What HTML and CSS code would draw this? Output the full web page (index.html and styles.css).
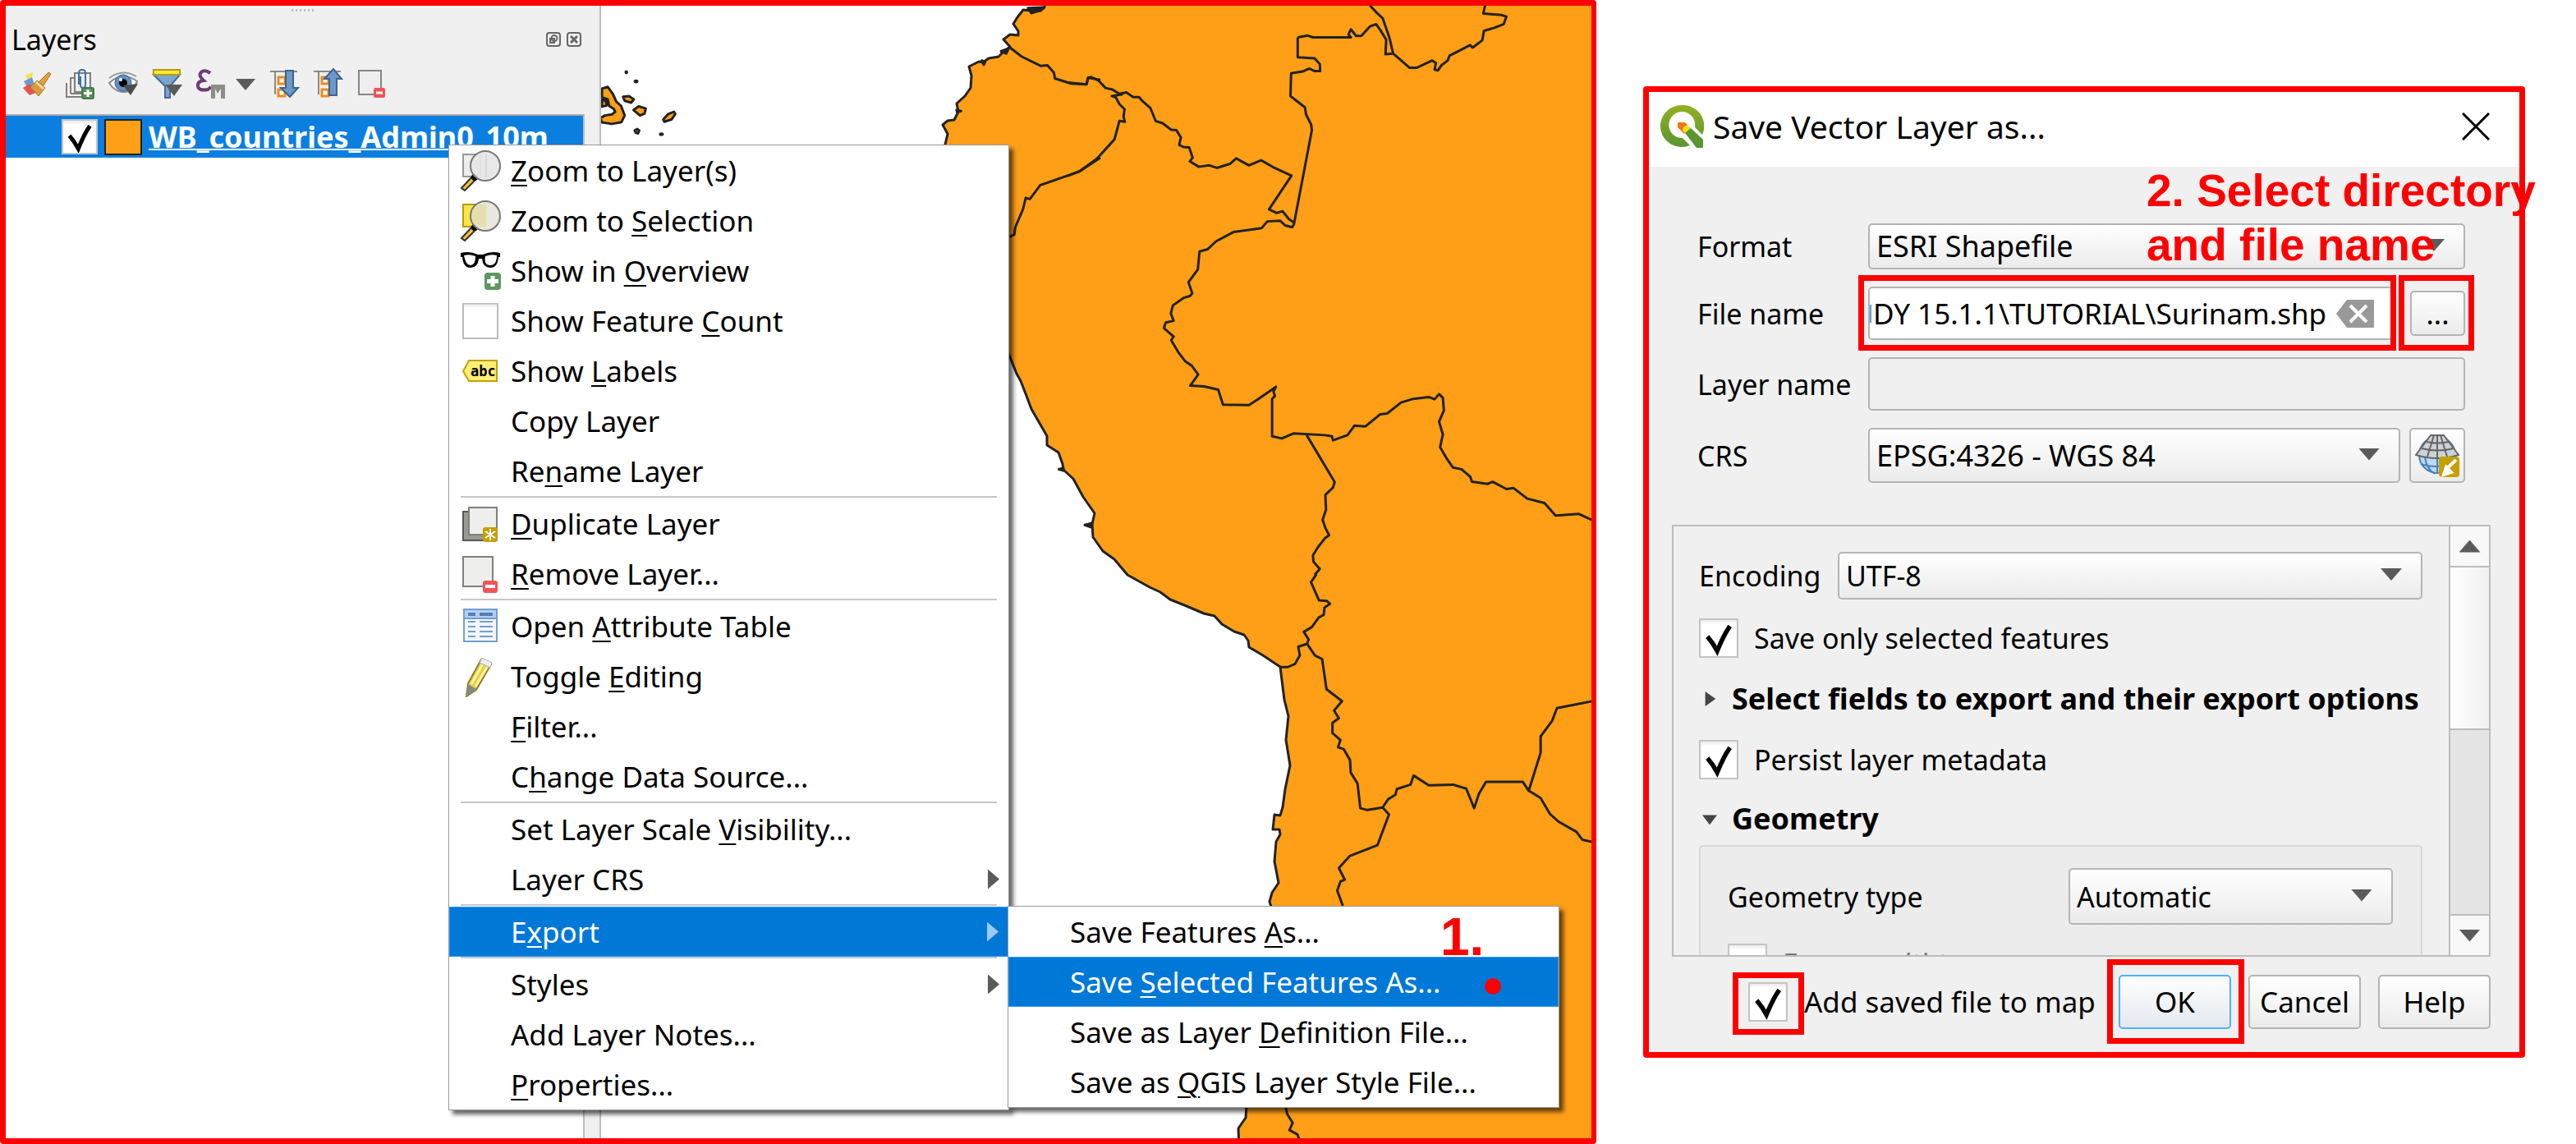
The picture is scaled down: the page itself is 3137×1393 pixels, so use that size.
FILE: index.html
```html
<!DOCTYPE html>
<html lang="en">
<head>
<meta charset="utf-8">
<title>Export selected features</title>
<link rel="stylesheet" href="styles.css">
</head>
<body>
<main class="guide">
  <section class="qgis">
    <aside class="dock">
      <div class="dock-grip" aria-hidden="true"><i></i><i></i><i></i><i></i><i></i><i></i></div>
      <header class="dock-head">
        <h2>Layers</h2>
        <button class="mini" aria-label="Float panel"><svg viewBox="0 0 18 18"><rect x="1" y="1" width="16" height="16" rx="3"/><circle cx="10" cy="7.500" r="3.500"/><rect x="5" y="8" width="5" height="5"/></svg></button>
        <button class="mini" aria-label="Close panel"><svg viewBox="0 0 18 18"><rect x="1" y="1" width="16" height="16" rx="3"/><path d="M5 5l8 8M13 5l-8 8" stroke-width="3"/></svg></button>
      </header>
      <div class="toolbar">
        <button aria-label="Open layer styling panel"><svg viewBox="0 0 38 38"><path d="M5 9l10-4-2 14z" fill="#f7e05a"/><path d="M4 16l10-5 4 12-8 4z" fill="#6c9bd0"/><path d="M3 24l8-5 10 10-10 4z" fill="#e8534b"/><path d="M22 17L34 5l3 2-9 14z" fill="#e0a03c" stroke="#a97220"/><path d="M12 23l8-8 10 9-8 10z" fill="#d99a43" stroke="#b27a2d"/><path d="M19 17l9 8" stroke="#f4d9a5" stroke-width="3"/></svg></button>
        <button aria-label="Add group"><svg viewBox="0 0 38 38" fill="none" stroke="#808078" stroke-width="2"><path d="M3 18v17h18M8 31V12h4M8 31h14"/><rect x="13" y="6" width="19" height="23" fill="#eee"/><path d="M18 20V6q0-4 4-4t4 4v14q0 4-3 4t-3-4V10" stroke="#3f6fa8"/><rect x="22" y="24" width="14" height="13" rx="2" fill="#5b9160" stroke="#437a48"/><path d="M29 26v9M24 30.500h10" stroke="#fff" stroke-width="3"/></svg></button>
        <button aria-label="Manage map themes"><svg viewBox="0 0 38 38"><path d="M2 18Q18 3 36 16Q30 30 18 29Q8 28 2 18z" fill="#fff" stroke="#8c8c8c" stroke-width="2"/><path d="M2 12Q18 0 35 10" fill="none" stroke="#999" stroke-width="2"/><circle cx="19" cy="18" r="10" fill="#5f8fc5" stroke="#3c628f"/><circle cx="19" cy="18" r="5"/><circle cx="16" cy="14" r="2" fill="#fff"/><path d="M19 21l18-2-9 14z" fill="#4c4c4c"/></svg></button>
        <button aria-label="Filter legend"><svg viewBox="0 0 38 38"><path d="M3 8h32L23 22v14h-6V22z" fill="#7ba6d3" stroke="#456a94" stroke-width="2"/><rect x="3" y="2" width="32" height="6" fill="#fbe935" stroke="#b39a1a" stroke-width="2"/><path d="M17 20h21l-10 14z" fill="#5b5b5b"/></svg></button>
        <button class="wide" aria-label="Filter by expression"><svg viewBox="0 0 76 38"><path d="M19 6q-7-5-11-1t3 10q-8 1-7 7t12 4l4-3" fill="none" stroke="#6d3b78" stroke-width="4"/><path d="M20 37V20h17v17h-5V25l-4 6-3-6v12z" fill="#8d8d88"/><path d="M50 13h24L62 27z" fill="#5b5b5b"/></svg></button>
        <button aria-label="Expand all"><svg viewBox="0 0 38 38"><path d="M1 4h33M7 4v28" stroke="#8a8a85" stroke-width="2"/><path d="M11 11h8v8h-8zM11 26h8v8h-8z" fill="#fff" stroke="#f08a1c" stroke-width="3"/><path d="M20 3h9v21h6L25 35 14 24h6z" fill="#6c98c9" stroke="#3e648f" stroke-width="2"/></svg></button>
        <button aria-label="Collapse all"><svg viewBox="0 0 38 38"><path d="M1 4h33M7 4v28" stroke="#8a8a85" stroke-width="2"/><path d="M11 11h8v8h-8zM11 26h8v8h-8z" fill="#fff" stroke="#f08a1c" stroke-width="3"/><path d="M20 33h9V13h6L25 1 14 13h6z" fill="#6c98c9" stroke="#3e648f" stroke-width="2"/></svg></button>
        <button aria-label="Remove layer"><svg viewBox="0 0 38 38"><rect x="3" y="3" width="27" height="29" fill="#eee" stroke="#878781" stroke-width="2"/><rect x="21" y="24" width="14" height="12" rx="2" fill="#f15357"/><path d="M24 30h8" stroke="#fff" stroke-width="3"/></svg></button>
      </div>
      <div class="layer-list">
        <div class="layer-row">
          <input class="check" type="checkbox" id="layer" checked>
          <span class="swatch"></span>
          <label for="layer">WB_countries_Admin0_10m</label>
        </div>
      </div>
    </aside>

    <svg class="map" viewBox="732 7 1206 1379" preserveAspectRatio="xMinYMin slice" role="img" aria-label="Map of South America">
      <path class="land" d="M1272 0L1272 9 1267 13 1256 13 1246 12 1239 21 1234 29 1240 38 1240 43 1230 42 1222 48 1230 57 1222 63 1216 69 1204 71 1197 76 1192 75 1180 81 1183 92 1182 107 1175 117 1165 126 1167 136 1162 146 1154 147 1148 152 1154 163 1151 176 1170 300 1230 435 1238 455 1243 464 1250 482 1256 498 1275 531 1275 542 1289 551 1294 565 1295 572 1307 583 1319 605 1333 625 1330 638 1331 654 1343 671 1357 681 1373 700 1400 715 1413 721 1425 730 1445 738 1466 747 1479 750 1488 760 1503 769 1515 773 1520 780 1521 788 1538 798 1559 812 1561 828 1564 852 1569 872 1566 901 1571 932 1565 961 1562 983 1559 993 1552 992 1550 1010 1558 1010 1559 1016 1554 1025 1552 1049 1557 1075 1549 1087 1546 1098 1550 1110 1518 1346 1517 1361 1508 1374 1509 1400H1960V-10z"/>
      <g class="border" transform="translate(720 0) scale(.3954 .4464)">
        <path d="M1290 130L1325 154 1385 180 1405 178 1425 198 1428 214 1478 228 1525 230 1530 212 1568 218M1568 430L1503 468 1383 505 1351 543 1338 540 1330 570 1306 620 1303 640 1289 646"/>
        <path d="M1262 140l24-8-8 14z M1345 22l48-2-8 8-30 8z M1520 1432l22-5v12z M1440 1280l14-4v8z M1203 165l10 4-4 8z M1125 300l14 3-12 3z" fill="#222"/>
        <path class="isle" d="M33 242l18-5 16 20 10 20 15 12 5 12 6 14-10 18-30 5-30-4-5-12 14-7 22-3 10-7-5-8-14-8-4-18-18-6zM33 272l12 4 2 12-14 3zM98 264l18-2 15 9-8 9-20-5zM130 300l16-10 22 6-4 14-14 5zM222 326l15-15 18-6 4 6-12 15-22 6zM134 356l8-4 6 4-4 8-7-2z"/>
        <circle cx="108" cy="197" r="4"/><ellipse cx="138" cy="222" rx="6" ry="4"/><ellipse cx="216" cy="366" rx="6" ry="3"/>
      </g>
      <g class="border" transform="translate(1300 0) scale(.4209 .4464)">
        <path d="M0 225L30 228 55 230 60 212 68 210 90 220 110 240 130 244 150 256 170 252 190 265 207 265 215 274 240 295 255 330 275 336 300 354 315 355 328 375 323 395 335 401 352 402 362 430 354 440 380 455 410 451 432 458 470 447 488 432 525 451 560 437 595 456 648 479 583 571 605 581 622 576 640 597 656 608"/>
        <path d="M160 257L128 262 140 266 150 284 165 298 162 318 166 332 150 330 136 380 85 433 35 467 0 480"/>
        <path d="M666 102L695 97 710 102H820L813 94 820 80 835 98 850 98 875 72 893 66 905 82 922 108 920 148 942 146 932 105 912 50 895 35 875 15"/>
        <path d="M666 102V156L715 159 730 175 731 194 715 194 700 187 680 195 647 200 645 262 687 293 690 312 705 340 707 355 655 612 650 620 630 615 615 602 578 604 562 622 480 633 430 658 405 680 382 686 377 735 350 770 361 800 355 807 335 813 305 833 299 855 307 875 284 880 279 895 307 918 300 928 320 960 340 985 360 998 378 1022 355 1052 395 1054 436 1063 450 1104 525 1105 550 1090 603 1055 596 1068 600 1080 592 1088V1190L620 1196 655 1182 745 1187 765 1190 768 1201 810 1187 830 1161 862 1163 905 1130 925 1128 965 1098 1000 1088 1045 1083 1062 1089 1075 1075 1086 1085 1089 1120 1075 1150 1086 1185 1078 1220 1098 1252 1115 1275 1140 1280 1165 1300 1170 1314 1215 1320 1230 1314 1270 1334 1290 1331 1330 1360 1380 1372 1412 1406 1480 1402 1525 1422"/>
        <path d="M692 1187L773 1315 768 1330 746 1350 748 1390 738 1418 746 1440 757 1460 745 1468 725 1492 710 1515 712 1533 730 1552 715 1568"/>
        <path d="M942 146L990 185 1010 185 1055 165 1066 172 1062 190 1072 192 1082 178 1100 165 1105 152 1165 123 1172 130 1200 110 1205 84 1235 76 1262 66 1270 45 1255 41 1203 37 1208 15"/>
      </g>
      <g class="border" transform="translate(1200 700) scale(.4847 .4419)">
        <path d="M832 -2L818 20 838 70 858 72 866 80 852 90 850 110 838 117 820 144 800 157 812 178 808 190 786 198 790 222 778 245 760 254H742"/>
        <path d="M808 190L828 222 846 232 857 315 896 348 876 374 888 395 872 408V436L892 455 886 475 900 480 916 510 918 545 935 575 942 643 960 648 998 641 1012 618 1030 606 1034 590 1068 578 1076 553 1114 580 1175 578 1208 589 1228 643 1240 603 1258 570 1350 570 1365 595 1395 490V445L1424 402 1436 367 1530 347"/>
        <path d="M1366 595L1395 615 1418 658 1440 680 1485 708 1500 730 1530 737M998 641L1014 660 985 745 915 775 888 808 903 840 892 845 884 870 898 912M754 1463L758 1485 772 1510 764 1530 784 1542 790 1560"/>
      </g>
    </svg>

    <nav class="menu context-menu" aria-label="Layer menu">
      <button><svg viewBox="0 0 50 50"><rect x="4" y="5" width="21" height="27" fill="#eee" stroke="#999" stroke-width="2"/><path d="M2 46L16 31l4 4L6 49z" fill="#f2c43d" stroke="#333" stroke-width="2"/><circle cx="18" cy="33" r="4"/><circle cx="31" cy="19" r="18" fill="#e6e6e6" fill-opacity=".92" stroke="#777" stroke-width="2"/><path d="M32 5v28" stroke="#ccc"/></svg><span><u>Z</u>oom to Layer(s)</span></button>
      <button><svg viewBox="0 0 50 50"><rect x="4" y="5" width="21" height="27" fill="#fbe34c" stroke="#b99a12" stroke-width="2"/><path d="M2 46L16 31l4 4L6 49z" fill="#f2c43d" stroke="#333" stroke-width="2"/><circle cx="18" cy="33" r="4"/><circle cx="31" cy="19" r="18" fill="#e8e7dc" fill-opacity=".94" stroke="#777" stroke-width="2"/><path d="M15 12q8-9 17-7v27q-10 2-17-8z" fill="#e5dfb0"/></svg><span>Zoom to <u>S</u>election</span></button>
      <button><svg viewBox="0 0 50 50"><path d="M1 3q11-3 21 2h6q10-5 21-2v5h-2q-1 13-10 13T27 10h-4q-1 11-10 11T3 8H1z"/><path d="M5 6q7-2 14 1 0 11-6 11T5 6zM31 7q7-3 14-1 0 12-8 12T31 7z" fill="#fff"/><rect x="30" y="27" width="20" height="21" rx="4" fill="#5f965f"/><path d="M40 31v13M33 37.500h14" stroke="#fff" stroke-width="5"/></svg><span>Show in <u>O</u>verview</span></button>
      <button><svg viewBox="0 0 50 50"><rect x="4" y="4" width="42" height="42" fill="#fff" stroke="#bbb" stroke-width="2"/><path d="M5 6h40" stroke="#eee" stroke-width="3"/></svg><span>Show Feature <u>C</u>ount</span></button>
      <button><svg viewBox="0 0 50 50"><path d="M11 12h34v25H11L4 25z" fill="#fcef78" stroke="#c4a000" stroke-width="2"/><text x="13" y="31" class="tag">abc</text></svg><span>Show <u>L</u>abels</span></button>
      <button><span>Copy Layer</span></button>
      <button><span>Re<u>n</u>ame Layer</span></button>
      <hr>
      <button><svg viewBox="0 0 50 50"><path d="M4 10h30v35H4z" fill="#999a90" stroke="#565650" stroke-width="2"/><rect x="11" y="5" width="34" height="33" fill="#eeeeec" stroke="#80807a" stroke-width="2"/><rect x="28" y="29" width="18" height="18" rx="3" fill="#c4a000"/><path d="M37 31v14M31 34l12 8M43 34l-12 8" stroke="#fff" stroke-width="2"/></svg><span><u>D</u>uplicate Layer</span></button>
      <button><svg viewBox="0 0 50 50"><rect x="4" y="4" width="36" height="36" fill="#eeeeec" stroke="#80807a" stroke-width="2"/><rect x="28" y="33" width="18" height="15" rx="3" fill="#f15357"/><path d="M31 40h12" stroke="#fff" stroke-width="4"/></svg><span><u>R</u>emove Layer...</span></button>
      <hr>
      <button><svg viewBox="0 0 50 50"><rect x="5" y="4" width="40" height="39" fill="#f3f6fa" stroke="#729fcf" stroke-width="2"/><path d="M5 4h40v11H5z" fill="#b3cfee" stroke="#729fcf" stroke-width="2"/><path d="M10 10h9M24 10h16" stroke="#517fb5" stroke-width="4"/><path d="M10 19h9M24 19h16M10 25h9M24 25h16M10 31h9M24 31h16M10 37h9M24 37h16" stroke="#729fcf" stroke-width="2"/></svg><span>Open <u>A</u>ttribute Table</span></button>
      <button><svg viewBox="0 0 50 50"><path d="M26 4l12 6-18 31-12 8 2-16z" fill="#e6cf45" stroke="#8f8030" stroke-width="2"/><path d="M28 9L14 34M34 12L19 37" stroke="#fbf3a5" stroke-width="3"/><path d="M27 2l12 6-2 6-13-6z" fill="#eee" stroke="#aaa"/><path d="M10 34l10 6-12 9z" fill="#888"/></svg><span>Toggle <u>E</u>diting</span></button>
      <button><span><u>F</u>ilter...</span></button>
      <button><span>C<u>h</u>ange Data Source...</span></button>
      <hr>
      <button><span>Set Layer Scale <u>V</u>isibility...</span></button>
      <button class="sub"><span>Layer CRS</span></button>
      <hr>
      <button class="sub active"><span>E<u>x</u>port</span></button>
      <hr>
      <button class="sub"><span>Styles</span></button>
      <button><span>Add Layer Notes...</span></button>
      <button><span><u>P</u>roperties...</span></button>
    </nav>

    <nav class="menu export-menu" aria-label="Export menu">
      <button><span>Save Features <u>A</u>s...</span></button>
      <button class="active"><span>Save <u>S</u>elected Features As...</span></button>
      <button><span>Save as Layer <u>D</u>efinition File...</span></button>
      <button><span>Save as <u>Q</u>GIS Layer Style File...</span></button>
      <strong class="note step-one">1.</strong>
      <i class="pointer"></i>
    </nav>
  </section>

  <section class="dialog" role="dialog" aria-labelledby="dialog-title">
    <header class="title-bar">
      <svg class="logo" viewBox="0 0 54 52"><defs><linearGradient id="leaf" x2="0" y2="1"><stop stop-color="#93b023"/><stop offset="1" stop-color="#589632"/></linearGradient></defs><path d="M27 0a26 25.500 0 1 0 10 49l-9-9a16 16 0 1 1 15-13l9 9A26 25.500 0 0 0 27 0z" fill="url(#leaf)"/><path d="M22 21h9l6 7-7 7-8-8z" fill="#ee7913"/><path d="M29 27l5-3 4 5-6 6-4-4z" fill="#f7e017"/><path d="M31 34l7-6 15 14v10H45z" fill="#589632"/></svg>
      <h1 id="dialog-title">Save Vector Layer as...</h1>
      <button class="close" aria-label="Close"><svg viewBox="0 0 34 34"><path d="M1 1l32 32M33 1L1 33" stroke="#000" stroke-width="3"/></svg></button>
    </header>

    <form class="form">
      <label for="format">Format</label>
      <span class="select"><select id="format"><option>ESRI Shapefile</option></select></span>

      <label for="file">File name</label>
      <div class="pair">
        <span class="file marked">
          <input id="file" type="text" value="DY 15.1.1\TUTORIAL\Surinam.shp">
          <button type="button" class="clear" aria-label="Clear"><svg viewBox="0 0 46 34"><path d="M13 0h33v34H13L0 17z" fill="#999"/><path d="M17 7l20 20M37 7L17 27" stroke="#fff" stroke-width="4"/></svg></button>
        </span>
        <span class="marked browse"><button type="button">...</button></span>
      </div>

      <label for="layer-name">Layer name</label>
      <input id="layer-name" type="text" disabled>

      <label for="crs">CRS</label>
      <div class="pair">
        <span class="select"><select id="crs"><option>EPSG:4326 - WGS 84</option></select></span>
        <button type="button" class="crs-button" aria-label="Select CRS"><svg viewBox="0 0 54 52"><circle cx="27" cy="25" r="22" fill="#b7dbf8" stroke="#4b80b5" stroke-width="2"/><path d="M7 36q20 6 30 0M27 28v20M12 28q2 14 12 20" fill="none" stroke="#4b80b5" stroke-width="2"/><path d="M19 1h16l18 24q-26 8-52 0z" fill="#ccd2d5" stroke="#666" stroke-width="2"/><path d="M14 9q13 3 27 0M8 17q19 5 39 0M23 1l-8 26M31 1l8 26M27 1v27" fill="none" stroke="#666" stroke-width="2"/><rect x="29" y="27" width="25" height="25" rx="4" fill="#c4a000"/><path d="M50 31l-12 11M38 40l6 6-9 3z" fill="#fff" stroke="#fff" stroke-width="4"/></svg></button>
      </div>
    </form>

    <div class="scroll-area">
      <div class="options">
        <div class="encoding"><label for="encoding">Encoding</label><span class="select"><select id="encoding"><option>UTF-8</option></select></span></div>
        <label class="option"><input class="check" type="checkbox" checked>Save only selected features</label>
        <h3 class="closed">Select fields to export and their export options</h3>
        <label class="option"><input class="check" type="checkbox" checked>Persist layer metadata</label>
        <h3 class="open">Geometry</h3>
        <div class="group">
          <div class="geometry"><label for="geometry">Geometry type</label><span class="select"><select id="geometry"><option>Automatic</option></select></span></div>
          <label class="option off"><input class="check" type="checkbox" disabled>Force multi-type</label>
        </div>
      </div>
      <div class="scrollbar" aria-hidden="true"><span class="step up"></span><span class="thumb"></span><span class="track"></span><span class="step down"></span></div>
    </div>

    <footer class="actions">
      <label class="add"><span class="marked"><input class="check" type="checkbox" checked></span>Add saved file to map</label>
      <span class="marked ok"><button class="default">OK</button></span>
      <button>Cancel</button>
      <button>Help</button>
    </footer>
    <strong class="note step-two">2. Select directory<br>and file name</strong>
  </section>
</main>
</body>
</html>
```
FILE: styles.css
```css
* { box-sizing: border-box; }
body { margin: 0; background: #fff; color: #000; font: 35px/48px "Noto Sans", sans-serif; }
button, input, select { font: inherit; color: inherit; margin: 0; }
button { padding: 0; }
h1, h2, h3 { margin: 0; font-weight: 400; }
svg { display: block; }

.guide { display: grid; grid-template-columns: 1944fr 1074fr; align-items: start; column-gap: 57px; min-height: 100vh; padding-right: 62px; }

/* QGIS window */
.qgis { position: relative; align-self: stretch; display: grid; grid-template-columns: 725px 1fr; border: 7px solid #f00; border-right-width: 6px; border-radius: 4px; }
.dock { display: flex; flex-direction: column; background: #f0f0f0; border-right: 2px solid #bdbdbd; }
.dock-grip { display: flex; justify-content: center; gap: 3px; height: 17px; padding-top: 4px; }
.dock-grip i { width: 2px; height: 3px; background: #bbb; }
.dock-head { display: flex; align-items: center; gap: 7px; padding: 0 22px 0 7px; }
.dock-head h2 { flex: 1; font-size: 34px; }
.mini { width: 18px; height: 18px; border: 0; background: none; }
.mini svg { fill: none; stroke: #666; stroke-width: 2; }
.toolbar { display: flex; gap: 15px; height: 67px; padding: 11px 18px; }
.toolbar button { width: 38px; height: 38px; border: 0; background: none; }
.toolbar .wide { width: 76px; }
.layer-list { flex: 1; width: 705px; background: #fff; border-top: 2px solid #aaa; border-right: 2px solid #bdbdbd; }
.layer-row { display: flex; align-items: center; gap: 8px; height: 51px; padding-left: 68px; background: #0b7fe0; color: #fff; font-size: 36px; font-weight: 700; }
.layer-row .check { width: 44px; height: 43px; }
.layer-row label { text-decoration: underline; text-decoration-thickness: 2px; white-space: nowrap; }
.swatch { width: 46px; height: 44px; background: #ff9f17; border: 2px solid #222; }

.map { width: 100%; height: 100%; min-height: 0; background: #fff; }
.land, .border { stroke: #222; stroke-width: 3px; stroke-linejoin: round; }
.land, .map .isle { fill: #ff9f17; }
.border { fill: none; }
.border path { vector-effect: non-scaling-stroke; }
.border circle, .border ellipse { fill: #222; }

/* Menus */
.menu { position: absolute; background: #fff; border: 1px solid #999; box-shadow: 5px 5px 5px #0009; }
.context-menu { left: 539px; top: 169px; width: 683px; }
.export-menu { left: 1220px; top: 1096px; width: 672px; }
.menu button { position: relative; display: flex; align-items: center; width: 100%; height: 61px; padding: 0 0 0 75px; border: 0; background: none; white-space: nowrap; }
.menu svg { position: absolute; left: 13px; width: 50px; height: 50px; }
.menu u { text-decoration-thickness: 2px; text-underline-offset: 4px; }
.menu hr { height: 3px; margin: 0 14px; border: 0; border-top: 2px solid #c8c8c8; }
.menu .active { background: #0078d7; color: #fff; border: 1px solid #2a9bf5; padding-left: 74px; }
.sub::after { content: ""; position: absolute; right: 11px; width: 14px; height: 24px; background: #5b5b5b; clip-path: polygon(0 0, 100% 50%, 0 100%); }
.sub.active::after { background: #9cc9f0; }
.tag { font: 700 17px "DejaVu Sans Mono", monospace; }
.note { position: absolute; color: #f00; font: 700 55px/66px "Liberation Sans", Arial, sans-serif; white-space: nowrap; }
.step-one { left: 526px; top: 4px; font-size: 64px; }
.pointer { position: absolute; left: 580px; top: 87px; width: 20px; height: 20px; border-radius: 50%; background: #f00; }

/* Dialog */
.dialog { position: relative; margin-top: 105px; padding-bottom: 28px; border: 7px solid #f00; border-radius: 4px; background: #f0f0f0; }
.title-bar { display: flex; align-items: center; gap: 11px; height: 91px; padding: 0 36px 8px 13px; background: #fff; }
.title-bar h1 { flex: 1; font-size: 39px; }
.logo { width: 54px; height: 52px; }
.close { width: 34px; height: 34px; border: 0; background: none; }
.form { display: grid; grid-template-columns: 208px 1fr; grid-template-rows: 56px 65px 65px 67px; row-gap: 21px; align-items: center; padding: 69px 66px 51px 59px; }
.form > label { font-size: 34px; }
.form select { font-size: 36px; }
.form > .select, .form > .pair, .form > input { height: 100%; }
.pair { display: flex; align-items: center; gap: 11px; }
.pair > .select { flex: 1; height: 100%; }

.select { position: relative; display: block; }
.select::after { content: ""; position: absolute; right: 25px; top: 50%; width: 26px; height: 15px; margin-top: -9px; background: #5b5b5b; clip-path: polygon(0 0, 100% 0, 50% 100%); pointer-events: none; }
select { appearance: none; width: 100%; height: 100%; padding: 0 8px; }
select, .dialog footer button, .browse button, .crs-button { border: 2px solid #b4b4b4; border-radius: 5px; background: linear-gradient(#fff, #ebebeb); }
input[type="text"] { width: 100%; height: 100%; padding: 0 4px; border: 2px solid #b4b4b4; border-radius: 5px; background: #fff; }
#layer-name { background: #efefef; }

.file { flex: 1; display: flex; height: 100%; }
#file { background: linear-gradient(#4da3f0, #4da3f0) 0 20px / 2px 22px no-repeat #fff; }
.clear { position: absolute; right: 23px; top: 16px; width: 46px; height: 34px; border: 0; background: none; }
.browse { width: 67px; height: 55px; margin-left: 10px; }
.browse button, .crs-button { width: 100%; height: 100%; }
.pair > .crs-button { width: 68px; }
.crs-button svg { width: 54px; height: 52px; margin: auto; }

.marked { position: relative; }
.marked::after { content: ""; position: absolute; border: 7px solid #f00; pointer-events: none; }
.file.marked::after { inset: -14px -4px -13px -12px; }
.browse.marked::after { inset: -19px -11px -18px -14px; }
.add .marked::after { inset: -12px -20px -16px -19px; }
.ok.marked::after { inset: -19px -16px -18px -14px; }

.check { appearance: none; flex: none; display: block; width: 48px; height: 48px; border: 2px solid #c4c4c4; background: #fff; box-shadow: inset 0 3px 3px #eee; }
.check:checked { background: #fff url("data:image/svg+xml,%3Csvg xmlns='http://www.w3.org/2000/svg' viewBox='0 0 48 48'%3E%3Cpath d='M9 22q7 8 13 19Q31 19 39 8' fill='none' stroke='%23000' stroke-width='6'/%3E%3C/svg%3E") center / 100% no-repeat; }

.scroll-area { display: flex; height: 526px; margin: 0 35px 0 28px; border: 2px solid #bdbdbd; overflow: hidden; }
.options { flex: 1; padding: 31px 32px 0 31px; font-size: 34px; }
.encoding { display: grid; grid-template-columns: 169px 1fr; align-items: center; height: 58px; margin-bottom: 23px; }
.encoding .select { height: 58px; }
.option { display: flex; align-items: center; gap: 19px; height: 48px; }
.options h3 { display: flex; align-items: center; gap: 18px; height: 100px; padding-left: 4px; font-size: 36px; font-weight: 700; white-space: nowrap; }
.options h3::before { content: ""; width: 18px; height: 18px; background: #444; }
.options .closed::before { clip-path: polygon(20% 0, 90% 50%, 20% 100%); }
.options .open::before { clip-path: polygon(0 20%, 100% 20%, 50% 85%); }
.options .open { height: 80px; padding-top: 16px; }
.options .open::before { margin-top: 2px; }
.group { height: 200px; padding: 26px 34px 0 33px; border: 2px solid #d8d8d8; border-radius: 5px; background: #ececec; }
.geometry { display: grid; grid-template-columns: 1fr 395px; align-items: center; height: 69px; margin-bottom: 23px; }
.geometry .select { height: 69px; }
.off { color: #777; }
.scrollbar { display: flex; flex-direction: column; width: 49px; border-left: 2px solid #bdbdbd; background: #e5e5e5; }
.step { display: grid; place-items: center; height: 48px; background: #f8f8f8; }
.step::after { content: ""; width: 26px; height: 15px; background: #5b5b5b; clip-path: polygon(0 0, 100% 0, 50% 100%); }
.up::after { clip-path: polygon(50% 0, 100% 100%, 0 100%); }
.thumb { height: 200px; border: 2px solid #bdbdbd; border-width: 2px 0; background: linear-gradient(90deg, #fff, #f0f0f0); }
.track { flex: 1; border-bottom: 2px solid #bdbdbd; }

.actions { display: flex; align-items: center; gap: 21px; padding: 22px 35px 0 121px; }
.actions button { width: 137px; height: 66px; white-space: nowrap; }
.add { display: flex; align-items: center; gap: 20px; margin-right: auto; white-space: nowrap; }
.dialog footer .default { border-color: #4fb0ff; background: linear-gradient(#fff, #e3e8ee); }
.step-two { left: 606px; top: 87px; }
```
